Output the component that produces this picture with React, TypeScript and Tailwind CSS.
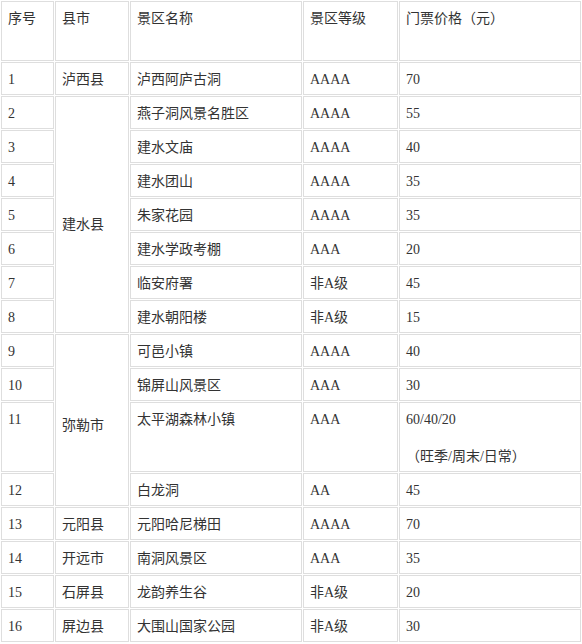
const rows: {
  no: number;
  county?: string;
  span?: number;
  spanClass?: string;
  name: string;
  level: string;
  price: string;
  note?: string;
}[] = [
  { no: 1, county: "泸西县", name: "泸西阿庐古洞", level: "AAAA", price: "70" },
  { no: 2, county: "建水县", span: 7, spanClass: "align-middle pt-[28px] pb-[8px]", name: "燕子洞风景名胜区", level: "AAAA", price: "55" },
  { no: 3, name: "建水文庙", level: "AAAA", price: "40" },
  { no: 4, name: "建水团山", level: "AAAA", price: "35" },
  { no: 5, name: "朱家花园", level: "AAAA", price: "35" },
  { no: 6, name: "建水学政考棚", level: "AAA", price: "20" },
  { no: 7, name: "临安府署", level: "非A级", price: "45" },
  { no: 8, name: "建水朝阳楼", level: "非A级", price: "15" },
  { no: 9, county: "弥勒市", span: 4, spanClass: "align-middle pt-[20px] pb-[8px]", name: "可邑小镇", level: "AAAA", price: "40" },
  { no: 10, name: "锦屏山风景区", level: "AAA", price: "30" },
  { no: 11, name: "太平湖森林小镇", level: "AAA", price: "60/40/20", note: "（旺季/周末/日常）" },
  { no: 12, name: "白龙洞", level: "AA", price: "45" },
  { no: 13, county: "元阳县", name: "元阳哈尼梯田", level: "AAAA", price: "70" },
  { no: 14, county: "开远市", name: "南洞风景区", level: "AAA", price: "35" },
  { no: 15, county: "石屏县", name: "龙韵养生谷", level: "非A级", price: "20" },
  { no: 16, county: "屏边县", name: "大围山国家公园", level: "非A级", price: "30" },
];

const cell = "border border-[#dedede] pl-[6px] pt-[8px] align-top leading-[18px]";

export default function App() {
  return (
    <div
      className="w-[582px] bg-white text-[14px] text-[#333]"
      style={{ fontFamily: '"Liberation Serif", "Noto Sans CJK SC", serif' }}
    >
      <table className="w-[582px] table-fixed border-separate [border-spacing:1px]">
        <thead>
          <tr>
            <th className={`${cell} w-[53px] h-[60px] pl-[5px] text-left font-normal`}>序号</th>
            <th className={`${cell} w-[74px] text-left font-normal`}>县市</th>
            <th className={`${cell} w-[172px] text-left font-normal`}>景区名称</th>
            <th className={`${cell} w-[95px] text-left font-normal`}>景区等级</th>
            <th className={`${cell} w-[182px] text-left font-normal`}>门票价格（元）</th>
          </tr>
        </thead>
        <tbody>
          {rows.map((r) => (
            <tr key={r.no}>
              <td className={`${cell} pl-[5px] ${r.note ? "h-[70px]" : "h-[33px]"}`}>{r.no}</td>
              {r.county && (
                <td
                  rowSpan={r.span ?? 1}
                  className={`border border-[#dedede] pl-[6px] leading-[18px] ${r.spanClass ?? "pt-[8px] align-top"}`}
                >
                  {r.county}
                </td>
              )}
              <td className={cell}>{r.name}</td>
              <td className={cell}>{r.level}</td>
              <td className={cell}>
                <div>{r.price}</div>
                {r.note && <div className="mt-[19px]">{r.note}</div>}
              </td>
            </tr>
          ))}
        </tbody>
      </table>
    </div>
  );
}
